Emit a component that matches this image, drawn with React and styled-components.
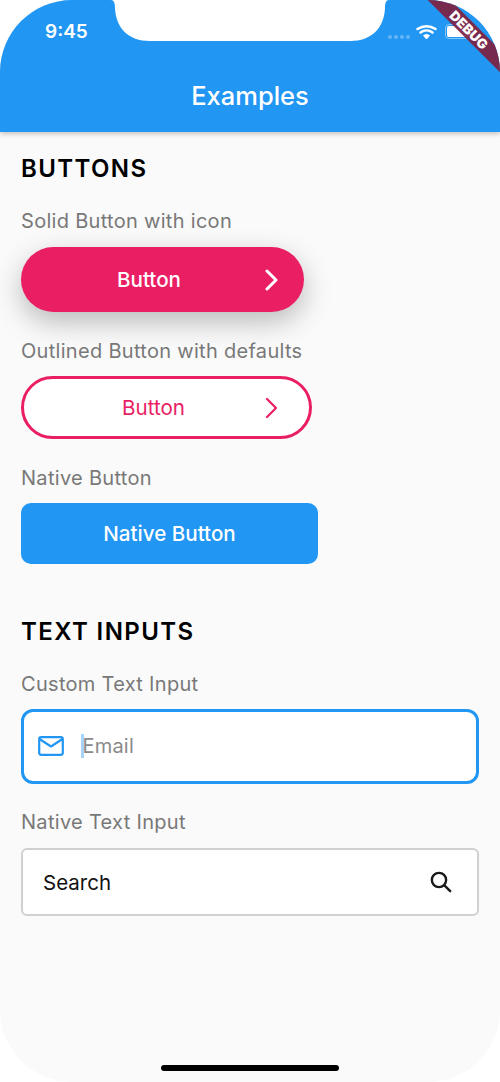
import React from "react";
import styled, { createGlobalStyle } from "styled-components";

const Global = createGlobalStyle`
  html, body { margin: 0; padding: 0; background: #fff; }
  #root { width: 500px; height: 1082px; }
`;

const Screen = styled.div`
  position: relative;
  width: 500px;
  height: 1082px;
  border-radius: 72px;
  overflow: hidden;
  background: #fafafa;
  font-family: Inter, "Liberation Sans", sans-serif;
  display: flex;
  flex-direction: column;
`;

const AppBar = styled.header`
  flex: none;
  height: 132px;
  box-sizing: border-box;
  padding-top: 80px;
  background: #2196f3;
  box-shadow: 0 2px 5px rgba(0, 0, 0, 0.22);
  text-align: center;
  position: relative;
`;

const Title = styled.h1`
  margin: 0;
  font-size: 25.5px;
  line-height: 32px;
  font-weight: 500;
  color: #fff;
`;

const Notch = styled.svg`
  position: absolute;
  left: 108px;
  top: 0;
`;

const Clock = styled.span`
  position: absolute;
  left: 45px;
  top: 20px;
  font-size: 19px;
  line-height: 24px;
  font-weight: 600;
  color: #fff;
`;

const StatusIcons = styled.svg`
  position: absolute;
  left: 380px;
  top: 18px;
`;

const Ribbon = styled.div`
  position: absolute;
  top: 22px;
  right: -44px;
  width: 150px;
  height: 16px;
  transform: rotate(45deg);
  background: rgba(128, 32, 64, 0.92);
  color: #fff;
  font-size: 13.5px;
  line-height: 16px;
  font-weight: 900;
  letter-spacing: 0.2px;
  text-align: center;
`;

const Content = styled.main`
  flex: 1;
  padding: 22px 21px 0;
  display: flex;
  flex-direction: column;
`;

const Heading = styled.h2`
  margin: ${(p) => p.$top || 0}px 0 0;
  font-size: 24px;
  line-height: 30px;
  font-weight: 600;
  letter-spacing: 1.4px;
  color: #000;
`;

const Label = styled.div`
  margin-top: ${(p) => p.$top}px;
  font-size: 20px;
  line-height: 26px;
  letter-spacing: 0.3px;
  color: #787878;
`;

const SolidButton = styled.div`
  margin-top: 13px;
  width: 283px;
  height: 65px;
  border-radius: 33px;
  background: #e91e63;
  box-shadow: 0 10px 28px rgba(0, 0, 0, 0.26);
  color: #fff;
  display: flex;
  align-items: center;
  box-sizing: border-box;
  padding: 0 26px 0 96px;
  justify-content: space-between;
  font-size: 20.6px;
  font-weight: 500;
`;

const OutlinedButton = styled.div`
  margin-top: 12px;
  width: 291px;
  height: 63px;
  box-sizing: border-box;
  border: 3px solid #e91e63;
  border-radius: 32px;
  background: #fff;
  color: #e91e63;
  display: flex;
  align-items: center;
  padding: 0 31.5px 0 98px;
  justify-content: space-between;
  font-size: 20.6px;
`;

const NativeButton = styled.div`
  margin-top: 12px;
  width: 297px;
  height: 61px;
  border-radius: 10px;
  background: #2196f3;
  color: #fff;
  display: flex;
  align-items: center;
  justify-content: center;
  font-size: 20.6px;
  font-weight: 500;
`;

const CustomInput = styled.div`
  margin-top: 12px;
  height: 75px;
  box-sizing: border-box;
  border: 3px solid #2196f3;
  border-radius: 12px;
  background: #fff;
  display: flex;
  align-items: center;
  padding: 0 0 2px 14px;
`;

const Caret = styled.span`
  width: 2.5px;
  height: 24px;
  margin-left: 17px;
  background: #a6d4fa;
`;

const Placeholder = styled.span`
  margin-left: -1px;
  font-size: 20px;
  letter-spacing: 0.2px;
  color: #8a8a8a;
`;

const SearchInput = styled.div`
  margin-top: 13px;
  height: 68px;
  box-sizing: border-box;
  border: 2px solid #d0d0d0;
  border-radius: 6px;
  background: #fff;
  display: flex;
  align-items: center;
  justify-content: space-between;
  padding: 0 25px 0 20px;
  font-size: 20.5px;
  color: #111;
`;

const HomeBar = styled.div`
  position: absolute;
  left: 161px;
  bottom: 11px;
  width: 178px;
  height: 6px;
  border-radius: 3px;
  background: #000;
`;

const Chevron = ({ width = 3 }) => (
  <svg width="13" height="22" viewBox="0 0 13 22" fill="none" stroke="currentColor" strokeWidth={width} strokeLinecap="round" strokeLinejoin="round">
    <path d="M2 2 L11 11 L2 20" />
  </svg>
);

export default function App() {
  return (
    <Screen>
      <Global />
      <AppBar>
        <Title>Examples</Title>
      </AppBar>
      <Notch width="284" height="42" viewBox="0 0 284 42">
        <path d="M0 0 H3 C6 0 7 3 7 8 C8 28 20 41 42 41 H242 C264 41 276 28 277 8 C277 3 278 0 281 0 H284 V-1 H0 Z" fill="#fff" />
      </Notch>
      <Clock>9:45</Clock>
      <StatusIcons width="92" height="28" viewBox="0 0 92 28" fill="none">
        <g fill="#fff" fillOpacity="0.3">
          <circle cx="10" cy="19" r="2" /><circle cx="16" cy="19" r="2" /><circle cx="22" cy="19" r="2" /><circle cx="28" cy="19" r="2" />
        </g>
        <path d="M37.5 11 A 16 16 0 0 1 55.5 11 M40.5 14.5 A 10 10 0 0 1 52.5 14.5" stroke="#fff" strokeWidth="2.6" strokeLinecap="round" />
        <path d="M43.5 17.5 A 5 5 0 0 1 49.5 17.5 L46.5 21 Z" fill="#fff" stroke="#fff" strokeLinejoin="round" />
        <rect x="65.5" y="6.5" width="26" height="14" rx="3.5" stroke="#fff" strokeOpacity="0.45" />
        <rect x="67" y="8" width="24" height="11" rx="2" fill="#fff" />
      </StatusIcons>
      <Ribbon>DEBUG</Ribbon>
      <Content>
        <Heading>BUTTONS</Heading>
        <Label $top={24}>Solid Button with icon</Label>
        <SolidButton>
          <span>Button</span>
          <Chevron />
        </SolidButton>
        <Label $top={26}>Outlined Button with defaults</Label>
        <OutlinedButton>
          <span>Button</span>
          <Chevron width={2.2} />
        </OutlinedButton>
        <Label $top={26}>Native Button</Label>
        <NativeButton>Native Button</NativeButton>
        <Heading $top={53}>TEXT INPUTS</Heading>
        <Label $top={24}>Custom Text Input</Label>
        <CustomInput>
          <svg width="26" height="20" viewBox="0 0 26 20" fill="none" stroke="#2196f3" strokeWidth="2.2" strokeLinejoin="round">
            <rect x="1.2" y="1.2" width="23.6" height="17.6" rx="2" />
            <path d="M1.5 3 L13 10.5 L24.5 3" />
          </svg>
          <Caret />
          <Placeholder>Email</Placeholder>
        </CustomInput>
        <Label $top={25}>Native Text Input</Label>
        <SearchInput>
          <span>Search</span>
          <svg width="22" height="22" viewBox="0 0 24 24" fill="none" stroke="#1a1a1a" strokeWidth="2.6" strokeLinecap="round">
            <circle cx="9.8" cy="9.8" r="7.8" />
            <path d="M15.5 15.5 L22 22" />
          </svg>
        </SearchInput>
      </Content>
      <HomeBar />
    </Screen>
  );
}
